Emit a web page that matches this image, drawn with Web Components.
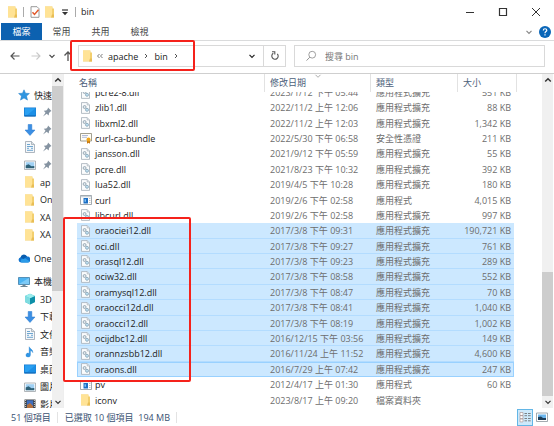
<!DOCTYPE html>
<html lang="zh-Hant">
<head>
<meta charset="utf-8">
<title>bin</title>
<style>
html, body { height: 100%; margin: 0; }
body { background: #fff; font: 9px/15px "Open Sans", "Noto Sans CJK TC", sans-serif; color: #222; }
</style>
</head>
<body>
<file-explorer></file-explorer>
<script>
const FOLDER = '<path d="M1 .5h7.500v2H10v9H1z" fill="#f3cf6e"/><path d="M1 .5h7v10.500H1z" fill="#ffe396"/><path d="M8 8.500h2v3H7z" fill="#e8bd55"/>';
const DOWN = '<path d="M4.200 0.500h3.600v5.500H11L6 11.500 1 6h3.200z" fill="#3b8fe4" stroke="#2477cc" stroke-width=".5"/>';
const DESK = '<path d="M0 1.500h12v9H0z" fill="#1479cf"/><path d="M.7 2.200h10.600v7H.7z" fill="#2aa0f2"/><path d="M11.300 2.200v7H3z" fill="#1c8fe6"/><path d="M1 10h10" stroke="#0b5ba5" stroke-width=".7"/>';
const DOC = '<path d="M1.500.5h6l3 3v8h-9z" fill="#f4f7fa" stroke="#9aa5ae" stroke-width=".8"/><path d="M7.500.5v3h3" fill="#d7dee4" stroke="#9aa5ae" stroke-width=".7"/><path d="M3 3.500h3M3 5.500h6M3 7.300h2M7 7.300h2M3 9.300h6" stroke="#5f9ccb" stroke-width=".9"/>';
const PIC = '<path d="M.5 2h11v8.500H.5z" fill="#fff" stroke="#9da3a8" stroke-width=".8"/><path d="M1.700 3.200h8.600v6H1.700z" fill="#9fd0f3"/><path d="M1.700 6.500l2.800-1.200 3 2 2.800-.3v2.200H1.700z" fill="#2e6177"/>';
const ICONS = {
  folder: FOLDER, down: DOWN, desk: DESK, doc: DOC, pic: PIC,
  check: '<path d="M2 .7h6l2 2v8.600H2z" fill="#fff" stroke="#8d8d8d" stroke-width=".9"/><path d="M3.500 6.200l2 2.200 4-4.600" fill="none" stroke="#e2592c" stroke-width="1.500"/>',
  drop: '<path d="M3 4h6" stroke="#333" stroke-width="1.200"/><path d="M3 6h6L6 9.300z" fill="#333"/>',
  min: '<path d="M2 6.500h8" stroke="#333" stroke-width="1"/>',
  max: '<path d="M2.500 2.500h7v7h-7z" fill="none" stroke="#333" stroke-width="1.200"/>',
  close: '<path d="M2 2l8 8M10 2l-8 8" stroke="#333" stroke-width="1"/>',
  chev: '<path d="M3.500 4.800L6 7.300l2.500-2.500" fill="none" stroke="currentColor" stroke-width="1.200"/>',
  sort: '<path d="M3.500 4.800L6 7.300l2.500-2.500" fill="none" stroke="#999" stroke-width=".8"/>',
  chevup: '<path d="M3.200 7.500L6 4.700l2.800 2.800" fill="none" stroke="currentColor" stroke-width="1.500"/>',
  right: '<path d="M5 4l2 2-2 2" fill="none" stroke="#555" stroke-width="1"/>',
  more: '<path d="M5.500 4l-2 2 2 2M8.500 4l-2 2 2 2" fill="none" stroke="#555" stroke-width=".8"/>',
  help: '<circle cx="6" cy="6" r="6" fill="#0a66b8"/><path d="M4.300 4.500c0-2.400 3.500-2.200 3.500-.2C7.800 5.600 6 5.600 6 7.200M6 8.300v1.300" fill="none" stroke="#fff" stroke-width="1.200"/>',
  back: '<path d="M10.500 6H2M5.500 2.500L2 6l3.500 3.500" fill="none" stroke="#555" stroke-width="1.200"/>',
  fwd: '<path d="M1.500 6H10M6.500 2.500L10 6 6.500 9.500" fill="none" stroke="#c9c9c9" stroke-width="1.100"/>',
  up: '<path d="M6 11V2M2.500 5.500L6 2l3.500 3.500" fill="none" stroke="#555" stroke-width="1.300"/>',
  refresh: '<path d="M8.300 3.800A3.200 3.200 0 1 1 4.300 3.300" fill="none" stroke="#555" stroke-width="1.100"/><path d="M3 1.800h2.800v2.800" fill="none" stroke="#555" stroke-width="1.100"/>',
  search: '<circle cx="7.200" cy="4.700" r="3.400" fill="none" stroke="#888" stroke-width=".8"/><path d="M4.800 7.200L1.500 10.600" stroke="#888" stroke-width=".9"/>',
  star: '<path d="M6 .8l1.500 3.400 3.900.3-2.900 2.600 1 4L6 9l-3.500 2.100 1-4L.6 4.500l3.900-.3z" fill="#2f95e0" stroke="#1c7cc9" stroke-width=".5"/>',
  pin: '<path d="M7 1.500l3.500 3.500-1 .5-1.500 1.500-.3 2.500-2-1.800L2 10.500l2.500-3.800L2.800 4.800l2.500-.4L6.700 3z" fill="#8593a1"/>',
  cloud: '<path d="M3 10.500a2.700 2.700 0 0 1-.4-5.300A3.600 3.600 0 0 1 9 4.500a3 3 0 0 1 .6 6z" fill="#1174cf"/><path d="M3.500 10.500a2 2 0 0 1 .6-3.500l3-.8 4.500 3a1.900 1.900 0 0 1-1.800 1.300z" fill="#2b9be8"/><path d="M2.600 5.200A3.600 3.600 0 0 1 9 4.500L5.500 7z" fill="#0a5cad"/>',
  pc: '<path d="M.5 1.500h11v7H.5z" fill="#4db4f2" stroke="#3f7ea8" stroke-width=".8"/><path d="M1 8L11 2v6z" fill="#7dcaf7"/><path d="M4.500 8.500h3v1.500h-3zM2.500 10h7v1h-7z" fill="#6e8796"/>',
  cube: '<path d="M1 3l5-2.300L11 3v6l-5 2.500L1 9z" fill="#35b8c9"/><path d="M1 3l5 2.200V11.500L1 9z" fill="#7fdce0"/><path d="M6 5.200L11 3v6l-5 2.500z" fill="#0d8fa8"/><path d="M1 3l5-2.300L11 3 6 5.200z" fill="#9becec"/>',
  music: '<path d="M5.200.8c.3 2 4 2.500 3.600 5.800-.7-1.500-1.800-1.800-2.400-2V9a2.200 1.900 0 1 1-1.200-1.600z" fill="#2f96e6" stroke="#1a7cd0" stroke-width=".4"/>',
  video: '<path d="M.5 1.500h11v9.500H.5z" fill="#3c4043"/><path d="M2.800 2.300h6.400v7.900H2.800z" fill="#3f6fc0"/><path d="M3 7l3-2 3 3v2H3z" fill="#b5723f"/><path d="M1.600 2v9M10.400 2v9" stroke="#ddd" stroke-width=".9" stroke-dasharray="1 1"/>',
  dll: '<path d="M1.500.6h5.700L9.500 3v8.400h-8z" fill="#fbfcfd" stroke="#a5afb7" stroke-width=".8"/><path d="M7.200.6V3h2.300" fill="#e2e7eb" stroke="#a5afb7" stroke-width=".6"/><circle cx="4.600" cy="5" r="1.500" fill="#dfe8ee" stroke="#8c9da9" stroke-width=".8"/><circle cx="7" cy="7.800" r="1.500" fill="#bfe0f2" stroke="#86a3b5" stroke-width=".8"/>',
  cert: '<path d="M.5 1.500h11v7.500H.5z" fill="#fffdf5" stroke="#8a8674" stroke-width=".8"/><path d="M2 3.500h6M2 5.300h5" stroke="#8d9ccf" stroke-width=".7"/><path d="M7 8.500v3.300l1.500-1 1.500 1V8.500z" fill="#c8780c"/><circle cx="8.500" cy="7.500" r="2" fill="#eea51c"/>',
  exe: '<path d="M.5 1.500h11v9H.5z" fill="#fff" stroke="#8c959c" stroke-width=".8"/><path d="M.8 2h10.400v1.300H.8z" fill="#c9d2d9"/><path d="M3.500 4h4.500v5.500H3.500z" fill="#1c6fc4"/><path d="M4.500 5.300h1.500v2.500H4.500z" fill="#7fc0f5"/><path d="M9 4.500h1.500M9 6.500h1.500M9 8.500h1.500" stroke="#aaa" stroke-width=".7"/>',
  details: '<path d="M1 1.500h3v3H1zM1 4.700h3v3H1zM1 7.900h3v3H1z" fill="#fff" stroke="#a28c8c" stroke-width=".6"/><path d="M5.500 2.500H8M9 2.500h2.700M5.500 4.700H8M9 4.700h2.700M5.500 7.500H8M9 7.500h2.700M5.500 9.800H8M9 9.800h2.700" stroke="#666" stroke-width=".8"/>',
  thumbs: '<path d="M.5 2h11v8.500H.5z" fill="#fff" stroke="#8c959c" stroke-width=".8"/><path d="M2 3.500h8v5.500H2z" fill="#6db7ee"/><path d="M2 6l3-.5 2 1.500h3v2H2z" fill="#1f3f59"/>'
};

function define(name, css, html, setup) {
  customElements.define(name, class extends HTMLElement {
    connectedCallback() {
      if (this.shadowRoot) return;
      const root = this.attachShadow({ mode: 'open' });
      root.innerHTML = `<style>*{box-sizing:border-box}button,input{font:inherit;color:inherit;border:0;padding:0;margin:0;background:none}button{display:flex;align-items:center;justify-content:center}a{color:inherit;text-decoration:none}${css}</style>` +
        (typeof html === 'function' ? html(this) : html);
      if (setup) setup(this, root);
    }
  });
}
const icon = n => `<ui-icon name="${n}"></ui-icon>`;

define('ui-icon', ':host{display:block;width:12px;height:12px;flex:none}svg{display:block;width:100%;height:100%}',
  el => `<svg viewBox="0 0 12 12" aria-hidden="true">${ICONS[el.getAttribute('name')]}</svg>`);

define('title-bar', `
  :host{display:flex;align-items:center;height:23px;padding:0 12px 0 7px}
  .quick{display:flex;align-items:center;gap:3px;flex:1}
  i{width:1px;height:10px;background:#aaa;margin:0 2px 0 1px}
  .win{display:flex;gap:21px}`,
  `<div class="quick">${icon('folder')}<i></i><button aria-label="內容">${icon('check')}</button><button aria-label="新增資料夾">${icon('folder')}</button><button aria-label="自訂">${icon('drop')}</button><i></i><span>bin</span></div>
   <div class="win"><button aria-label="最小化">${icon('min')}</button><button aria-label="最大化">${icon('max')}</button><button aria-label="關閉">${icon('close')}</button></div>`);

define('ribbon-tabs', `
  :host{display:flex;align-items:center;height:18px;padding:0 3px 0 1px;border-bottom:1px solid #dadbdc;color:#444}
  nav{display:flex;flex:1}
  button{height:17px}
  nav button{width:39px}
  nav .file{width:41px;background:#0c61b0;color:#fff}
  .tools{display:flex;gap:4px;color:#888}`,
  `<nav><button class="file">檔案</button><button>常用</button><button>共用</button><button>檢視</button></nav>
   <div class="tools"><button aria-label="展開功能區">${icon('chev')}</button><button aria-label="說明">${icon('help')}</button></div>`);

define('address-bar', `
  :host{display:flex;align-items:center;height:33px;padding:0 9px 2px;border-bottom:1px solid #cfcfcf;color:#444;position:relative}
  .go{display:flex;width:69px;gap:4px}
  .go button:nth-child(2){margin-left:5px}
  .box{display:flex;align-items:center;height:22px;border:1px solid #d9d9d9}
  .path{flex:206 1 0;color:#222}
  .path .crumbs{display:flex;align-items:center;flex:1;padding-left:3px}
  .path .crumbs a{margin:0 2px}
  .path > button{width:22px;height:20px}
  .path > button:last-child{border-left:1px solid #d9d9d9}
  .search{flex:239 1 0;margin-left:8px;padding-left:10px;gap:8px;color:#777}
  input{flex:1;min-width:0;outline:0}
  input::placeholder{color:#767676;opacity:1}
  .mark{position:absolute;left:70px;top:-1px;width:125px;height:31px;border:2px solid #f5221b;border-radius:2px;pointer-events:none}`,
  `<div class="go"><button aria-label="上一頁">${icon('back')}</button><button aria-label="下一頁">${icon('fwd')}</button><button aria-label="最近">${icon('chev')}</button><button aria-label="上層">${icon('up')}</button></div>
   <div class="box path"><div class="crumbs">${icon('folder')}${icon('more')}<a href="#apache">apache</a>${icon('right')}<a href="#bin">bin</a>${icon('right')}</div>
   <button aria-label="先前的位置">${icon('chev')}</button><button aria-label="重新整理">${icon('refresh')}</button></div>
   <label class="box search">${icon('search')}<input type="text" aria-label="搜尋 bin" placeholder="搜尋 bin"></label>
   <div class="mark"></div>`);

define('scroll-track', `
  :host{display:flex;flex-direction:column;width:11px;background:#f0f0f0;color:#333}
  button{height:12px}
  .rail{flex:1;display:flex;flex-direction:column}
  .thumb{background:#cdcdcd}`,
  el => { const [a, b, c] = el.getAttribute('parts').split(' ');
    return `<button aria-label="向上捲動">${icon('chevup')}</button><div class="rail"><div style="flex:${a}"></div><div class="thumb" style="flex:${b}"></div><div style="flex:${c}"></div></div><button aria-label="向下捲動">${icon('chev')}</button>`; });

define('nav-item', `
  :host{display:block;overflow:hidden;min-height:0}
  a{display:flex;align-items:center;gap:4px;height:18px;padding-left:24px;white-space:nowrap}
  :host([top]) a{padding-left:18px}`,
  el => `<a href="#">${icon(el.getAttribute('icon'))}<slot></slot></a>`);

const NAV = [['star', '快速存取', 1], ['desk', ''], ['down', ''], ['doc', ''], ['pic', ''], ['folder', 'ap'], ['folder', 'On'], ['folder', 'XA'], ['folder', 'XA'], null,
  ['cloud', 'One', 1], null, ['pc', '本機', 1], ['cube', '3D'], ['down', '下載'], ['doc', '文件'], ['music', '音樂'], ['desk', '桌面'], ['pic', '圖片'], ['video', '影片']];
define('nav-pane', `
  :host{display:flex;width:63px;flex:none}
  nav{flex:1;min-width:0;overflow:hidden;padding-top:12px;display:grid;grid-template-columns:minmax(0,1fr);grid-template-rows:repeat(9,1fr) 6px 1fr 6px repeat(7,1fr) 13px}
  .pin{margin-left:1px}`,
  '<nav>' + NAV.map(n => n ? `<nav-item icon="${n[0]}"${n[2] ? ' top' : ''}>${n[1] || '<ui-icon class="pin" name="pin"></ui-icon>'}</nav-item>` : '<span></span>').join('') +
  '</nav><scroll-track parts="0 206 105"></scroll-track>');

const DLL = '應用程式擴充', EXE = '應用程式';
const FILES = [
  ['dll', 'pcre2-8.dll', '2023/1/12 下午 05:44', DLL, '551 KB'],
  ['dll', 'zlib1.dll', '2022/11/2 上午 12:06', DLL, '88 KB'],
  ['dll', 'libxml2.dll', '2022/11/2 上午 12:03', DLL, '1,342 KB'],
  ['cert', 'curl-ca-bundle', '2022/5/30 下午 06:58', '安全性憑證', '211 KB'],
  ['dll', 'jansson.dll', '2021/9/12 下午 05:59', DLL, '55 KB'],
  ['dll', 'pcre.dll', '2021/8/23 下午 10:32', DLL, '392 KB'],
  ['dll', 'lua52.dll', '2019/4/5 下午 10:28', DLL, '180 KB'],
  ['exe', 'curl', '2019/2/6 下午 02:58', EXE, '4,015 KB'],
  ['dll', 'libcurl.dll', '2019/2/6 下午 02:58', DLL, '997 KB'],
  ['dll', 'oraociei12.dll', '2017/3/8 下午 09:31', DLL, '190,721 KB', 1],
  ['dll', 'oci.dll', '2017/3/8 下午 09:27', DLL, '761 KB', 1],
  ['dll', 'orasql12.dll', '2017/3/8 下午 09:23', DLL, '289 KB', 1],
  ['dll', 'ociw32.dll', '2017/3/8 下午 08:58', DLL, '552 KB', 1],
  ['dll', 'oramysql12.dll', '2017/3/8 下午 08:47', DLL, '70 KB', 1],
  ['dll', 'oraocci12d.dll', '2017/3/8 下午 08:41', DLL, '1,040 KB', 1],
  ['dll', 'oraocci12.dll', '2017/3/8 下午 08:19', DLL, '1,002 KB', 1],
  ['dll', 'ocijdbc12.dll', '2016/12/15 下午 03:56', DLL, '149 KB', 1],
  ['dll', 'orannzsbb12.dll', '2016/11/24 上午 11:52', DLL, '4,600 KB', 1],
  ['dll', 'oraons.dll', '2016/7/29 上午 07:42', DLL, '247 KB', 1],
  ['exe', 'pv', '2012/4/17 上午 01:30', EXE, '60 KB'],
  ['folder', 'iconv', '2023/8/17 上午 09:20', '檔案資料夾', '']
];
define('file-list', `
  :host{display:flex;flex:1;min-width:0;padding-left:13px;border-left:1px solid #eee}
  table{flex:1;min-width:0;display:flex;flex-direction:column;padding-right:25px}
  tr{display:grid;grid-template-columns:minmax(0,1fr) 106px 87px 59px;min-height:0;align-items:center}
  thead tr{height:18px;color:#4c607a}
  th{font-weight:400;text-align:left;padding:1px 0 2px 5px;border-right:1px solid #e2e2e2;white-space:nowrap;position:relative}
  th:first-child{padding-left:2px}
  .sort{position:absolute;top:-4px;left:calc(50% - 6px)}
  tbody{flex:1;min-height:0;position:relative;display:grid;grid-template-rows:8px repeat(20,1fr);margin-right:3px;color:#6d6d6d}
  tbody tr{grid-template-columns:minmax(0,1fr) 106px 87px 56px;overflow:hidden}
  tbody tr:first-child{align-content:end}
  td{padding:0 0 0 5px;white-space:nowrap;line-height:15px}
  td:first-child{display:flex;align-items:center;gap:3px;padding-left:3px;color:#222}
  td:last-child{text-align:right;padding:0 3px 0 0}
  .sel{background:#cce8ff;border-bottom:1px solid #b3dcff}
  .last{outline:1px solid #99d1ff;outline-offset:-1px}
  .mark{position:absolute;grid-row:10/20;left:-14px;top:-6px;bottom:-5px;width:128px;border:2px solid #f5221b;border-radius:2px;pointer-events:none}`,
  `<table><thead><tr><th>名稱</th><th>修改日期<ui-icon class="sort" name="sort"></ui-icon></th><th>類型</th><th>大小</th></tr></thead><tbody></tbody></table><scroll-track parts="186 124 0"></scroll-track>`,
  (el, root) => {
    const body = root.querySelector('tbody');
    body.innerHTML = FILES.map(f => `<tr class="${f[5] ? 'sel' : ''}${f[1] === 'oraons.dll' ? ' last' : ''}"><td>${icon(f[0])}<span>${f[1]}</span></td><td>${f[2]}</td><td>${f[3]}</td><td>${f[4]}</td></tr>`).join('');
    const mark = document.createElement('div');
    mark.className = 'mark';
    body.append(mark);
  });

define('status-bar', `
  :host{display:flex;align-items:center;height:18px;padding:0 4px 0 11px;color:#3a5272}
  i{width:1px;height:11px;background:#e3e3e3;margin:0 7px 0 6px}
  .views{display:flex;margin-left:auto;gap:1px}
  .views button{width:16px;height:17px}
  .views .on{background:#cde9fb;border:1px solid #63b6e6}`,
  `<span>51 個項目</span><i></i><span>已選取 10 個項目&nbsp; 194 MB</span><i></i><div class="views"><button class="on" aria-label="詳細資料">${icon('details')}</button><button aria-label="大圖示">${icon('thumbs')}</button></div>`);

define('file-explorer', `
  :host{display:flex;flex-direction:column;height:100vh;overflow:hidden}
  main{display:flex;flex:1;min-height:0;padding-right:1px}`,
  '<title-bar></title-bar><ribbon-tabs></ribbon-tabs><address-bar></address-bar><main><nav-pane></nav-pane><file-list></file-list></main><status-bar></status-bar>');
</script>
</body>
</html>
